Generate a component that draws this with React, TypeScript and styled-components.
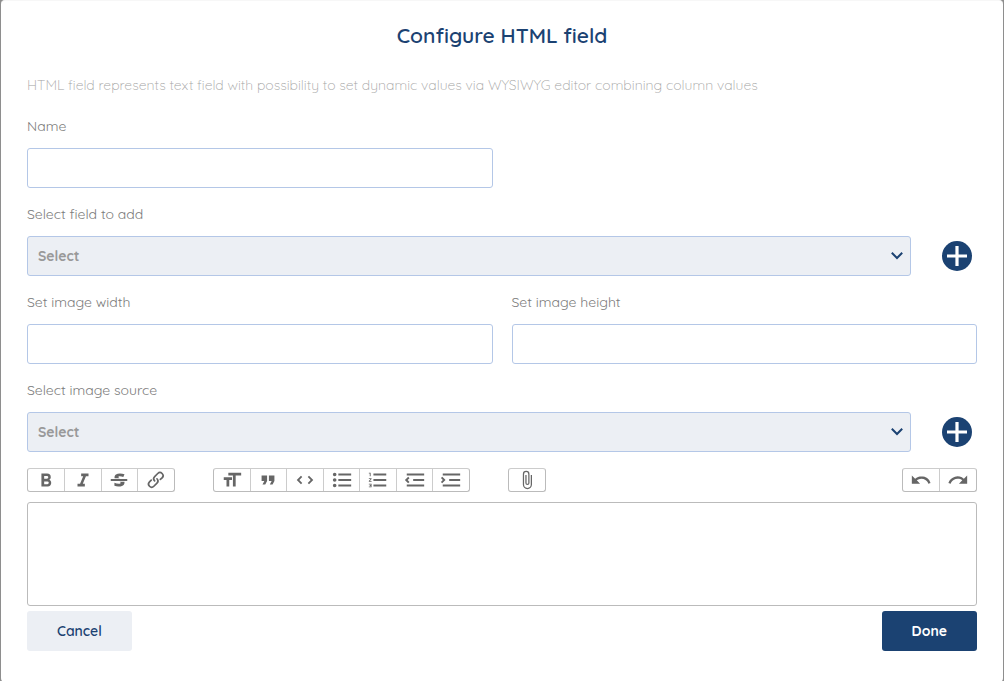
import React from "react";
import styled, { createGlobalStyle } from "styled-components";

const navy = "#1b4272";
const mist = "#eceff4";
const outline = "#b4c7e7";

const GlobalStyle = createGlobalStyle`
  * { box-sizing: border-box; }
  body {
    margin: 0;
    background: #8e8e8e;
    font-family: Quicksand, Lato, sans-serif;
    font-size: 14px;
    line-height: 20px;
    color: #7c7c7c;
  }
  button, input, select, textarea { font: inherit; }
`;

const Dialog = styled.main`
  display: flex;
  flex-direction: column;
  margin: 0 1px;
  padding: 21px 26px 31px;
  border-top: 1px solid #f7f7f7;
  border-radius: 4px;
  background: #fff;
`;

const Title = styled.h1`
  margin: 0;
  font-size: 21px;
  line-height: 26px;
  font-weight: 600;
  text-align: center;
  color: ${navy};
`;

const Description = styled.p`
  margin: 27px 0 21px;
  font-weight: 300;
  color: #a4a4a4;
`;

const Form = styled.form`
  display: flex;
  flex-direction: column;
  gap: 16px;
`;

const Columns = styled.div`
  display: grid;
  grid-template-columns: 1fr 1fr;
  gap: 19px;
`;

const Field = styled.div`
  display: flex;
  flex-direction: column;
  gap: 12px;
`;

const TextInput = styled.input`
  width: 100%;
  height: 40px;
  padding: 0 10px;
  border: 1px solid ${outline};
  border-radius: 3px;
  background: #fff;
`;

const PickRow = styled.div`
  display: flex;
  align-items: center;
  gap: 31px;
  padding-right: 5px;
`;

const SelectWrap = styled.div`
  display: grid;
  flex: 1;
  align-items: center;
  > * { grid-area: 1 / 1; }
  > svg { justify-self: end; margin-right: 8px; pointer-events: none; }
`;

const SelectBox = styled.select`
  width: 100%;
  height: 40px;
  padding: 0 10px;
  appearance: none;
  border: 1px solid ${outline};
  border-radius: 3px;
  background: ${mist};
  color: #999;
  font-weight: 700;
`;

const AddButton = styled.button`
  display: flex;
  width: 30px;
  height: 30px;
  padding: 0;
  border: 0;
  border-radius: 50%;
  background: ${navy};
`;

const Editor = styled.div`
  display: flex;
  flex-direction: column;
  gap: 10px;
`;

const Toolbar = styled.div`
  display: flex;
  gap: 38px;
`;

const ToolGroup = styled.div<{ $width: number; $end?: boolean }>`
  display: flex;
  width: ${(p) => p.$width}px;
  height: 24px;
  margin-left: ${(p) => (p.$end ? "auto" : "0")};
  border: 1px solid #bbb;
  border-top-color: #ccc;
  border-radius: 3px;
`;

const ToolButton = styled.button`
  display: flex;
  flex: 1;
  align-items: center;
  justify-content: center;
  padding: 0;
  border: 0;
  background: transparent;
  color: #666;
  & + & { border-left: 1px solid #ccc; }
`;

const EditorArea = styled.textarea`
  display: block;
  width: 100%;
  height: 104px;
  padding: 8px 10px;
  border: 1px solid #bbb;
  border-radius: 3px;
  resize: none;
`;

const Footer = styled.div`
  display: flex;
  justify-content: space-between;
  margin-top: -11px;
`;

const ActionButton = styled.button<{ $primary?: boolean }>`
  height: 40px;
  padding: 0 30px;
  border: 0;
  border-radius: 3px;
  background: ${(p) => (p.$primary ? navy : mist)};
  color: ${(p) => (p.$primary ? "#fff" : navy)};
  font-weight: ${(p) => (p.$primary ? 700 : 600)};
`;

const icons = {
  bold: "M15.6 11.8c1-.7 1.6-1.8 1.6-2.8a4 4 0 0 0-4-4H7v14h7c2.1 0 3.7-1.7 3.7-3.8 0-1.5-.8-2.8-2.1-3.4zM10 7.5h3a1.5 1.5 0 1 1 0 3h-3v-3zm3.5 9H10v-3h3.5a1.5 1.5 0 1 1 0 3z",
  italic: "M10 5v3h2.2l-3.4 8H6v3h8v-3h-2.2l3.4-8H18V5h-8z",
  strike: "M12.73 14l.28.14c.26.15.45.3.57.44.12.14.18.3.18.5 0 .3-.15.56-.44.75-.3.2-.76.3-1.39.3A13.52 13.52 0 0 1 7 14.95v3.37a10.64 10.64 0 0 0 4.84.88c1.26 0 2.35-.19 3.28-.56.93-.37 1.64-.9 2.14-1.57s.74-1.45.74-2.32c0-.26-.02-.51-.06-.75h-5.21zm-5.5-4c-.08-.34-.12-.7-.12-1.1 0-1.29.52-2.3 1.58-3.02 1.05-.72 2.5-1.08 4.34-1.08 1.62 0 3.28.34 4.97 1l-1.3 2.93c-1.47-.6-2.73-.9-3.8-.9-.55 0-.96.08-1.2.26-.26.17-.38.38-.38.64 0 .27.16.52.48.74.17.12.53.3 1.05.53H7.23zM3 13h18v-2H3v2z",
  link: "M9.88 13.7a4.3 4.3 0 0 1 0-6.07l3.37-3.37a4.26 4.26 0 0 1 6.07 0 4.3 4.3 0 0 1 0 6.06l-1.96 1.72a.91.91 0 1 1-1.3-1.3l1.97-1.71a2.46 2.46 0 0 0-3.48-3.48l-3.38 3.37a2.46 2.46 0 0 0 0 3.48.91.91 0 1 1-1.3 1.3zM4.25 19.46a4.3 4.3 0 0 1 0-6.07l1.93-1.9a.91.91 0 1 1 1.3 1.3l-1.93 1.9a2.46 2.46 0 0 0 3.48 3.48l3.37-3.38c.96-.96.96-2.52 0-3.48a.91.91 0 1 1 1.3-1.3 4.3 4.3 0 0 1 0 6.07l-3.38 3.38a4.26 4.26 0 0 1-6.07 0z",
  heading: "M12 9v3H9v7H6v-7H3V9h9zM8 4h14v3h-6v12h-3V7H8V4z",
  quote: "M6 17h3l2-4V7H5v6h3zm8 0h3l2-4V7h-6v6h3z",
  code: "M18.2 12L15 15.2l1.4 1.4L21 12l-4.6-4.6L15 8.8l3.2 3.2zM5.8 12L9 8.8 7.6 7.4 3 12l4.6 4.6L9 15.2 5.8 12z",
  bullets: "M4 4a2 2 0 1 0 0 4 2 2 0 0 0 0-4zm0 6a2 2 0 1 0 0 4 2 2 0 0 0 0-4zm0 6a2 2 0 1 0 0 4 2 2 0 0 0 0-4zm4 3h14v-2H8v2zm0-6h14v-2H8v2zm0-8v2h14V5H8z",
  numbers: "M2 17h2v.5H3v1h1v.5H2v1h3v-4H2v1zm1-9h1V4H2v1h1v3zm-1 3h1.8L2 13.1v.9h3v-1H3.2L5 10.9V10H2v1zm5-6v2h14V5H7zm0 14h14v-2H7v2zm0-6h14v-2H7v2z",
  outdent: "M3 19h19v-2H3v2zm7-6h12v-2H10v2zm-8.3-.3l2.8 2.9L6 14.2 4 12l2-2-1.4-1.5L1 12l.7.7zM3 5v2h19V5H3z",
  indent: "M3 19h19v-2H3v2zm7-6h12v-2H10v2zm-6.9-1L1 14.2l1.4 1.4L6 12l-.7-.7-2.8-2.8L1 9.9 3.1 12zM3 5v2h19V5H3z",
  attach: "M16.5 6v11.5a4 4 0 1 1-8 0V5a2.5 2.5 0 0 1 5 0v10.5a1 1 0 1 1-2 0V6H10v9.5a2.5 2.5 0 0 0 5 0V5a4 4 0 1 0-8 0v12.5a5.5 5.5 0 0 0 11 0V6h-1.5z",
  undo: "M12.5 8c-2.6 0-5 1-6.9 2.6L2 7v9h9l-3.6-3.6A8 8 0 0 1 20 16l2.4-.8a10.5 10.5 0 0 0-10-7.2z",
  redo: "M18.4 10.6a10.5 10.5 0 0 0-16.9 4.6L4 16a8 8 0 0 1 12.7-3.6L13 16h9V7l-3.6 3.6z",
};

type IconName = keyof typeof icons;

function Tool({ icon, label, size = 22 }: { icon: IconName; label: string; size?: number }) {
  return (
    <ToolButton type="button" aria-label={label}>
      <svg width={size} height={size} viewBox="0 0 24 24" fill="currentColor" aria-hidden="true">
        <path d={icons[icon]} />
      </svg>
    </ToolButton>
  );
}

function TextField({ id, label }: { id: string; label: string }) {
  return (
    <Field>
      <label htmlFor={id}>{label}</label>
      <TextInput id={id} type="text" />
    </Field>
  );
}

function PickField({ id, label }: { id: string; label: string }) {
  return (
    <Field>
      <label htmlFor={id}>{label}</label>
      <PickRow>
        <SelectWrap>
          <SelectBox id={id}>
            <option>Select</option>
          </SelectBox>
          <svg width="12" height="8" viewBox="0 0 12 8" fill="none" stroke={navy} strokeWidth="2" aria-hidden="true">
            <path d="M0.8 0.8L6 6L11.2 0.8" />
          </svg>
        </SelectWrap>
        <AddButton type="button" aria-label="Add">
          <svg width="30" height="30" viewBox="0 0 30 30" stroke="#fff" strokeWidth="3.2" aria-hidden="true">
            <path d="M15 5V25M5 15H25" />
          </svg>
        </AddButton>
      </PickRow>
    </Field>
  );
}

export default function App() {
  return (
    <>
      <GlobalStyle />
      <Dialog>
        <Title>Configure HTML field</Title>
        <Description>
          HTML field represents text field with possibility to set dynamic values via WYSIWYG editor combining column
          values
        </Description>
        <Form onSubmit={(e) => e.preventDefault()}>
          <Columns>
            <TextField id="name" label="Name" />
          </Columns>
          <PickField id="field" label="Select field to add" />
          <Columns>
            <TextField id="image-width" label="Set image width" />
            <TextField id="image-height" label="Set image height" />
          </Columns>
          <PickField id="source" label="Select image source" />
          <Editor>
            <Toolbar role="toolbar" aria-label="Formatting">
              <ToolGroup $width={148}>
                <Tool icon="bold" label="Bold" />
                <Tool icon="italic" label="Italic" />
                <Tool icon="strike" label="Strikethrough" />
                <Tool icon="link" label="Link" />
              </ToolGroup>
              <ToolGroup $width={257}>
                <Tool icon="heading" label="Heading" />
                <Tool icon="quote" label="Quote" />
                <Tool icon="code" label="Code" />
                <Tool icon="bullets" label="Bullets" />
                <Tool icon="numbers" label="Numbers" />
                <Tool icon="outdent" label="Decrease level" />
                <Tool icon="indent" label="Increase level" />
              </ToolGroup>
              <ToolGroup $width={38}>
                <Tool icon="attach" label="Attach files" size={20} />
              </ToolGroup>
              <ToolGroup $width={75} $end>
                <Tool icon="undo" label="Undo" />
                <Tool icon="redo" label="Redo" />
              </ToolGroup>
            </Toolbar>
            <EditorArea aria-label="HTML content" />
          </Editor>
          <Footer>
            <ActionButton type="button">Cancel</ActionButton>
            <ActionButton type="submit" $primary>
              Done
            </ActionButton>
          </Footer>
        </Form>
      </Dialog>
    </>
  );
}
